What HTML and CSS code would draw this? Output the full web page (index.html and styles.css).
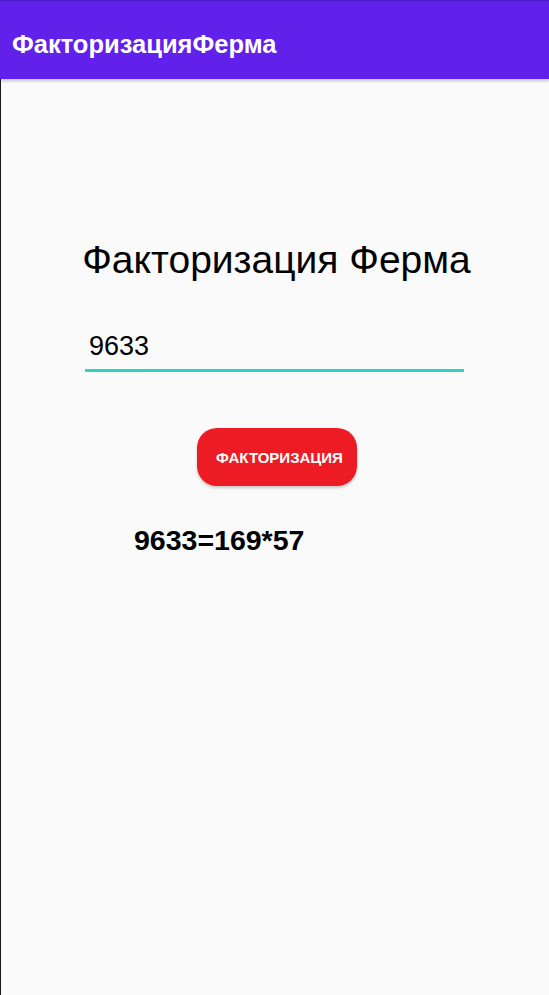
FILE: index.html
```html
<!DOCTYPE html>
<html lang="ru">
<head>
<meta charset="utf-8">
<title>ФакторизацияФерма</title>
<link rel="stylesheet" href="styles.css">
</head>
<body>
<div class="screen">
  <header class="appbar">
    <span class="appbar-title">ФакторизацияФерма</span>
  </header>
  <main class="content">
    <h1 class="title">Факторизация Ферма</h1>
    <div class="field">
      <span class="field-value">9633</span>
    </div>
    <button class="btn" type="button">ФАКТОРИЗАЦИЯ</button>
    <p class="result">9633=169*57</p>
  </main>
</div>
</body>
</html>
```
FILE: styles.css
```css
* { box-sizing: border-box; }
html, body { margin: 0; padding: 0; height: 100%; }
body {
  background: #fafafa;
  font-family: "Liberation Sans", Arial, sans-serif;
}
.screen {
  height: 995px;
  display: flex;
  flex-direction: column;
  border-left: 1px solid #1a1a1a;
  background: #fafafa;
}
.appbar {
  height: 79px;
  background: #6221ea;
  border-top: 1px solid #4b1cc4;
  display: flex;
  align-items: center;
  padding-left: 12px;
  padding-top: 8px;
  box-shadow: 0 2px 3px rgba(0,0,0,0.22);
  margin-left: -1px;
  position: relative;
  z-index: 1;
}
.appbar-title {
  color: #ffffff;
  font-weight: bold;
  font-size: 25.5px;
}
.content {
  display: flex;
  flex-direction: column;
  align-items: center;
  padding-top: 157px;
}
.title {
  margin: 0;
  font-weight: normal;
  font-size: 39px;
  color: #000;
  line-height: 48px;
  padding-left: 3px;
}
.field {
  width: 379px;
  margin-top: 46px;
  border-bottom: 3px solid #2dd4bf;
  padding: 0 4px 7px;
  margin-left: -1px;
}
.field-value {
  font-size: 27px;
  color: #000;
  line-height: 32px;
}
.btn {
  margin-top: 56px;
  width: 160px;
  height: 58px;
  border: none;
  border-radius: 20px;
  background: #ed1c24;
  color: #fff;
  font-family: "Liberation Sans", Arial, sans-serif;
  font-weight: bold;
  font-size: 15px;
  padding: 0 0 0 6px;
  box-shadow: 0 2px 3px rgba(0,0,0,0.2);
  margin-left: 3px;
}
.result {
  align-self: flex-start;
  margin: 38px 0 0 133px;
  font-weight: bold;
  font-size: 28.5px;
  color: #000;
}
```
